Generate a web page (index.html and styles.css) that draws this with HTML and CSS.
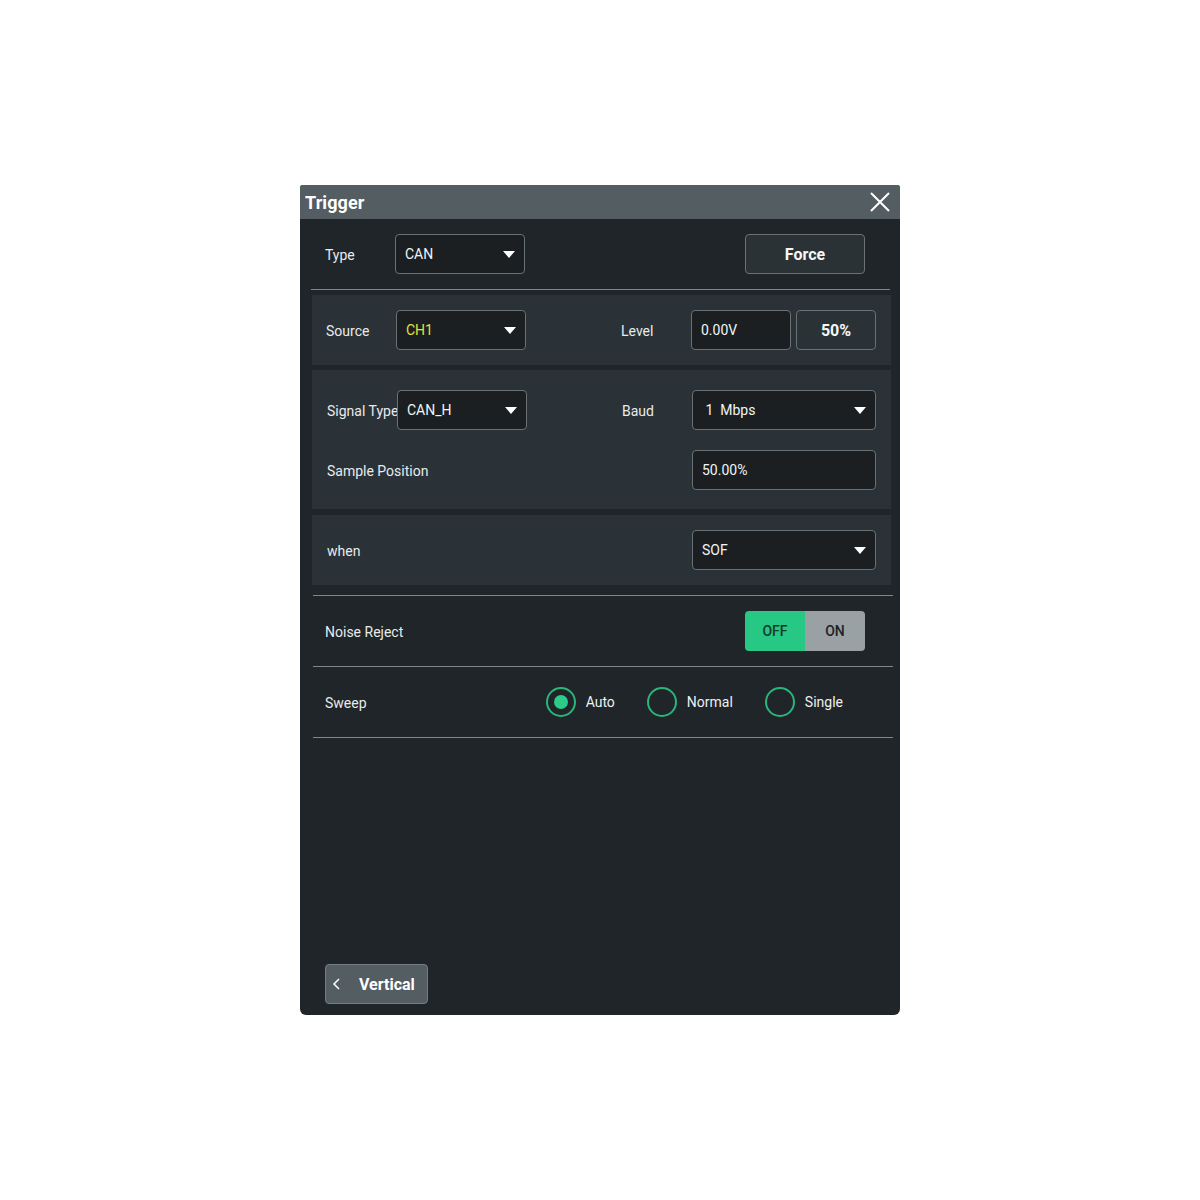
FILE: index.html
```html
<!DOCTYPE html>
<html>
<head>
<meta charset="utf-8">
<link rel="stylesheet" href="styles.css">
</head>
<body>
<div class="panel">
  <div class="header">
    <span class="title">Trigger</span>
    <svg class="close" width="22" height="22" viewBox="0 0 22 22"><path d="M2 2 L20 20 M20 2 L2 20" stroke="#fff" stroke-width="2" fill="none"/></svg>
  </div>
  <div class="body">
    <div class="row type-row">
      <span class="label">Type</span>
      <div class="select w130"><span>CAN</span><i class="caret"></i></div>
      <div class="spacer"></div>
      <div class="btn force">Force</div>
    </div>
    <div class="section first">
      <div class="line">
        <div class="half"><span class="label">Source</span><div class="select w130"><span class="yellow">CH1</span><i class="caret"></i></div></div>
        <div class="half right"><span class="label">Level</span><div class="input w100">0.00V</div><div class="btn pct">50%</div></div>
      </div>
    </div>
    <div class="section tall">
      <div class="line">
        <div class="half"><span class="label">Signal Type</span><div class="select w130"><span>CAN_H</span><i class="caret"></i></div></div>
        <div class="half right"><span class="label">Baud</span><div class="select w184"><span>&nbsp;1&nbsp; Mbps</span><i class="caret"></i></div></div>
      </div>
      <div class="line">
        <div class="half"><span class="label">Sample Position</span></div>
        <div class="half right"><span class="label"></span><div class="input w184">50.00%</div></div>
      </div>
    </div>
    <div class="section when">
      <div class="line">
        <div class="half"><span class="label">when</span></div>
        <div class="half right"><span class="label"></span><div class="select w184"><span>SOF</span><i class="caret"></i></div></div>
      </div>
    </div>
    <div class="row noise">
      <span class="label">Noise Reject</span>
      <div class="spacer"></div>
      <div class="toggle"><span class="off">OFF</span><span class="on">ON</span></div>
    </div>
    <div class="row sweep">
      <span class="label">Sweep</span>
      <div class="spacer"></div>
      <div class="radio checked"><i class="dot"></i><span>Auto</span></div>
      <div class="radio"><i class="dot"></i><span>Normal</span></div>
      <div class="radio"><i class="dot"></i><span>Single</span></div>
    </div>
    <div class="fill"></div>
    <div class="footer">
      <div class="back"><svg width="10" height="14" viewBox="0 0 10 14"><path d="M7 2 L2 7 L7 12" stroke="#fff" stroke-width="1.5" fill="none"/></svg><span>Vertical</span></div>
    </div>
  </div>
</div>
</body>
</html>
```

FILE: styles.css
```css
* { box-sizing: border-box; }
html, body { margin: 0; padding: 0; background: #ffffff; }
body { font-family: Roboto, "Liberation Sans", sans-serif; color: #e9ecee; }

.panel {
  margin: 185px 0 0 300px;
  width: 600px;
  height: 830px;
  background: #1f2529;
  display: flex;
  flex-direction: column;
  border-radius: 3px 3px 6px 6px;
  overflow: hidden;
}
.header {
  height: 34px;
  background: #535d62;
  display: flex;
  align-items: center;
  justify-content: space-between;
  padding: 0 9px 0 5px;
}
.title { font-size: 18px; font-weight: 700; color: #fff; letter-spacing: 0.1px; }
.close { display: block; }

.body { flex: 1; display: flex; flex-direction: column; }

.row { display: flex; align-items: center; height: 70px; }
.spacer { flex: 1; }
.label { font-size: 14px; color: #e8ebec; width: 70px; flex: none; white-space: nowrap; padding-top: 2px; }

.type-row { margin: 0 10px 0 11px; padding: 0 25px 0 14px; border-bottom: 1px solid #80878b; height: 71px; }

.select, .input {
  height: 40px;
  background: #1b1f22;
  border: 1px solid #6a7175;
  border-radius: 4px;
  display: flex;
  align-items: center;
  padding: 0 9px 0 9px;
  font-size: 14px;
  color: #f2f4f5;
}
.select span { flex: 1; }
.w130 { width: 130px; }
.w100 { width: 100px; }
.w184 { width: 185px; }
.caret {
  width: 0; height: 0;
  border-left: 6px solid transparent;
  border-right: 6px solid transparent;
  border-top: 7px solid #ffffff;
  display: block;
}
.yellow { color: #e5e03a; }

.btn {
  height: 40px;
  background: #2b3236;
  border: 1px solid #6a7175;
  border-radius: 4px;
  display: flex;
  align-items: center;
  justify-content: center;
  font-size: 16px;
  font-weight: 700;
  color: #f4f6f7;
}
.force { width: 120px; }
.pct { width: 80px; margin-left: 5px; }

.section {
  margin: 6px 9px 0 12px;
  background: #2a3237;
  padding: 15px 15px 15px 14px;
  display: flex;
  flex-direction: column;
  gap: 20px;
}
.section.first { margin-top: 5px; }
.section.tall { padding: 20px 15px 19px 15px; margin-top: 5px; }
.section.when { padding-left: 15px; }
.line { display: flex; align-items: center; height: 40px; }
.half { display: flex; align-items: center; }
.half:first-child { flex: 1; }
.half.right { width: 255px; }
.tall .half.right, .when .half.right { width: 254px; }

.noise { margin: 10px 7px 0 13px; padding: 0 28px 0 12px; border-top: 1px solid #80878b; height: 71px; }
.sweep { margin: 0 7px 0 13px; padding: 0 50px 0 12px; border-top: 1px solid #80878b; border-bottom: 1px solid #80878b; height: 72px; }

.toggle { display: flex; width: 120px; height: 40px; border-radius: 4px; overflow: hidden; font-size: 14px; font-weight: 500; }
.toggle span { display: flex; align-items: center; justify-content: center; }
.toggle .off { width: 60px; background: #27c784; color: #0f3a28; }
.toggle .on { flex: 1; background: #9aa1a5; color: #1c2226; }

.radio { display: flex; align-items: center; font-size: 14px; color: #eef0f1; }
.radio .dot {
  width: 30px; height: 30px;
  border: 2.5px solid #2ab57b;
  border-radius: 50%;
  display: flex;
  align-items: center;
  justify-content: center;
  margin-right: 10px;
}
.radio.checked .dot::after {
  content: "";
  width: 14px; height: 14px;
  border-radius: 50%;
  background: #2ccb87;
}
.sweep .radio + .radio { margin-left: 32px; }

.fill { flex: 1; }
.footer { padding: 0 0 11px 25px; }
.back {
  width: 103px; height: 40px;
  background: #535d62;
  border: 1px solid #737c80;
  border-radius: 4px;
  display: flex;
  align-items: center;
  padding-left: 6px;
  gap: 17px;
  font-size: 16px;
  font-weight: 700;
  color: #fff;
}
.back svg { display: block; }
```
